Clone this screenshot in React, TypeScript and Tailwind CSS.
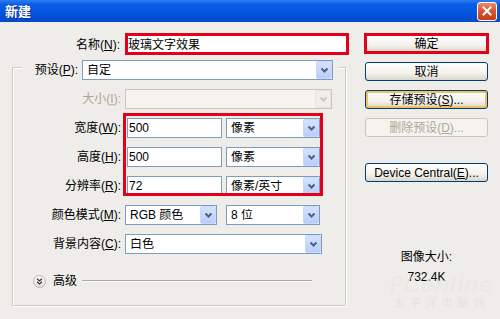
import React from 'react'

// renders "名称(N):" with the access key underlined, as Windows does
function Mnemonic({ text }: { text: string }) {
  const m = text.match(/^(.*\()(.)(\).*)$/)
  if (!m) return <>{text}</>
  return (
    <>
      {m[1]}
      <span className="underline underline-offset-[1px]">{m[2]}</span>
      {m[3]}
    </>
  )
}

function Chevron({ disabled }: { disabled?: boolean }) {
  return (
    <svg width="9" height="7" viewBox="0 0 9 7">
      <path
        d="M1.5 1.5 L4.5 4.5 L7.5 1.5"
        fill="none"
        stroke={disabled ? '#c9c7ba' : '#4d6185'}
        strokeWidth="2"
      />
    </svg>
  )
}

function Select({ className, value, disabled }: { className: string; value?: string; disabled?: boolean }) {
  return (
    <div
      className={`flex items-center h-[20px] border ${
        disabled ? 'border-[#c9c7ba] bg-[#f4f3ee]' : 'border-[#7f9db9] bg-white'
      } ${className}`}
    >
      <span className="flex-1 pl-[4px] text-[12px] leading-none text-black whitespace-nowrap overflow-hidden">
        {value}
      </span>
      <span
        className={`flex items-center justify-center w-[16px] h-[18px] rounded-[2px] border ${
          disabled
            ? 'bg-[#efeee8] border-[#e5e4dc]'
            : 'bg-[linear-gradient(to_bottom,#d6e2fd,#b9cdfb)] border-[#c7d6fb]'
        }`}
      >
        <Chevron disabled={disabled} />
      </span>
    </div>
  )
}

function TextBox({ className, value }: { className: string; value: string }) {
  return (
    <div className={`flex items-center h-[20px] border border-[#7f9db9] bg-white ${className}`}>
      <span className="pl-[1px] text-[12px] leading-none text-black whitespace-nowrap">{value}</span>
    </div>
  )
}

function Button({
  label,
  hot,
  disabled,
  className = '',
}: {
  label: string
  hot?: boolean
  disabled?: boolean
  className?: string
}) {
  return (
    <button
      className={`h-[19px] w-[123px] rounded-[3px] border text-[12px] leading-none flex items-center justify-center ${
        disabled
          ? 'border-[#c9c7ba] bg-[#f4f3ee] text-[#aca899]'
          : 'border-[#003c74] bg-[linear-gradient(to_bottom,#ffffff,#f3f2ec_60%,#d9d5c9)] text-black'
      } ${hot ? 'shadow-[inset_0_0_0_2px_#f5c061]' : ''} ${className}`}
    >
      <span>
        <Mnemonic text={label} />
      </span>
    </button>
  )
}

function Label({ text, disabled, className = 'w-[108px]' }: { text: string; disabled?: boolean; className?: string }) {
  return (
    <span
      className={`text-right text-[12px] leading-none whitespace-nowrap ${
        disabled ? 'text-[#aca899]' : 'text-black'
      } ${className}`}
    >
      <Mnemonic text={text} />
    </span>
  )
}

export default function App() {
  return (
    <div className="w-[500px] h-[319px] overflow-hidden flex flex-col bg-[#eeede9] font-['Liberation_Sans','Noto_Sans_CJK_SC',sans-serif]">
      {/* title bar */}
      <div className="h-[22px] flex items-center justify-between bg-[linear-gradient(to_bottom,#2d7cf2,#0a5ee6_20%,#0654de_60%,#0549c9)]">
        <span className="pl-[5px] text-[13px] font-bold text-white leading-none [text-shadow:1px_1px_0_#0a2f8a]">新建</span>
        <span className="mr-[3px] w-[20px] h-[19px] rounded-[3px] border border-white flex items-center justify-center bg-[linear-gradient(to_bottom,#eb8b6c,#d8532f_50%,#c63c18)]">
          <svg width="10" height="10" viewBox="0 0 10 10">
            <path d="M1.5 1.5 L8.5 8.5 M8.5 1.5 L1.5 8.5" stroke="#fff" strokeWidth="2" strokeLinecap="square" />
          </svg>
        </span>
      </div>

      <div className="relative flex flex-1">
        {/* left side */}
        <div className="w-[352px] flex flex-col">
          <div className="mt-[13px] flex items-center">
            <Label text="名称(N):" className="w-[120px]" />
            <div className="ml-[5px] w-[222px] h-[20px] flex items-center bg-white border border-[#7f9db9]">
              <span className="pl-[2px] text-[12px] leading-none text-black">玻璃文字效果</span>
            </div>
          </div>

          <div className="mt-[12px] ml-[12px] w-[334px] h-[239px] border border-[#cfcdbf] shadow-[inset_1px_1px_0_#ffffff,1px_1px_0_#ffffff] flex flex-col gap-[9px]">
            <div className="-mt-[8px] ml-[9px] w-[317px] h-[20px] flex items-center bg-[#eeede9]">
              <Label text="预设(P):" className="w-[56px]" />
              <Select className="ml-[4px] w-[251px]" value="自定" />
            </div>
            <div className="flex items-center">
              <Label text="大小(I):" disabled />
              <Select className="ml-[4px] w-[207px]" disabled />
            </div>
            <div className="flex items-center">
              <Label text="宽度(W):" />
              <TextBox className="ml-[6px] w-[95px]" value="500" />
              <Select className="ml-[4px] w-[94px]" value="像素" />
            </div>
            <div className="flex items-center">
              <Label text="高度(H):" />
              <TextBox className="ml-[6px] w-[95px]" value="500" />
              <Select className="ml-[4px] w-[94px]" value="像素" />
            </div>
            <div className="flex items-center">
              <Label text="分辨率(R):" />
              <TextBox className="ml-[6px] w-[95px]" value="72" />
              <Select className="ml-[4px] w-[94px]" value="像素/英寸" />
            </div>
            <div className="flex items-center">
              <Label text="颜色模式(M):" />
              <Select className="ml-[4px] w-[92px]" value="RGB 颜色" />
              <Select className="ml-[9px] w-[94px]" value="8 位" />
            </div>
            <div className="flex items-center">
              <Label text="背景内容(C):" />
              <Select className="ml-[4px] w-[197px]" value="白色" />
            </div>
            <div className="mt-[11px] ml-[20px] h-[14px] flex items-center">
              <span className="w-[13px] h-[13px] rounded-full border border-[#b5b4ad] bg-[linear-gradient(to_bottom,#ffffff,#e2e1da)] flex items-center justify-center">
                <svg width="7" height="7" viewBox="0 0 7 7">
                  <path d="M1 0.8 L3.5 3 L6 0.8 M1 3.8 L3.5 6 L6 3.8" fill="none" stroke="#333" strokeWidth="1.2" />
                </svg>
              </span>
              <span className="ml-[7px] text-[12px] leading-none text-black">高级</span>
              <span className="ml-[5px] w-[230px] h-[2px] border-t border-[#a9a8a2] bg-white" />
            </div>
          </div>
        </div>

        {/* right side */}
        <div className="ml-[13px] mt-[12px] w-[123px] flex flex-col">
          <Button label="确定" />
          <Button label="取消" className="mt-[9px]" />
          <Button label="存储预设(S)..." hot className="mt-[9px]" />
          <Button label="删除预设(D)..." disabled className="mt-[9px]" />
          <Button label="Device Central(E)..." className="mt-[26px]" />
          <div className="mt-[67px] flex flex-col items-center text-[12px] leading-[16px] text-black">
            <span>图像大小:</span>
            <span className="mt-[4px]">732.4K</span>
          </div>
        </div>

        {/* red annotation boxes */}
        <div className="pointer-events-none absolute left-[125px] top-[11px] w-[224px] h-[22px] border-[3px] border-[#e3001b]" />
        <div className="pointer-events-none absolute left-[364px] top-[11px] w-[125px] h-[21px] border-[3px] border-[#e3001b]" />
        <div className="pointer-events-none absolute left-[123px] top-[91px] w-[200px] h-[83px] border-[3px] border-[#e3001b]" />

        {/* watermark */}
        <div className="pointer-events-none absolute left-[390px] top-[252px] flex flex-col items-center opacity-50">
          <span className="text-[22px] italic leading-none text-[#e4e4e1] font-['DejaVu_Sans',sans-serif] tracking-[1px]">PConline</span>
          <span className="mt-[1px] text-[11px] leading-none text-[#dcdcd8] tracking-[5px] font-['Noto_Sans_CJK_SC',sans-serif]">太平洋电脑网</span>
        </div>
      </div>
    </div>
  )
}
